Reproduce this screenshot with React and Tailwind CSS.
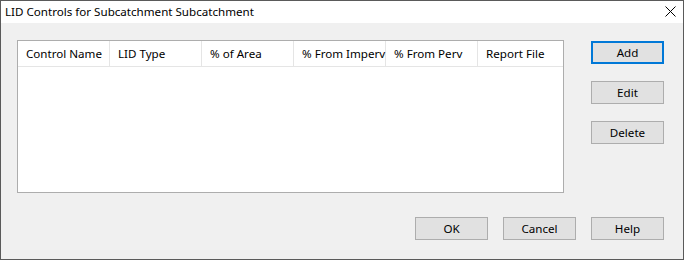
import React from 'react';

const columns = ['Control Name', 'LID Type', '% of Area', '% From Imperv', '% From Perv', 'Report File'];

const Button = ({ children, focused }) => (
  <button
    className={`w-[73px] h-[23px] bg-[#e1e1e1] text-[11.6px] text-black flex items-center justify-center ${
      focused ? 'border-2 border-[#0078d7]' : 'border border-[#adadad]'
    }`}
  >
    {children}
  </button>
);

export default function App() {
  return (
    <div
      className="w-[684px] h-[260px] border border-[#5a5a5a] bg-[#f0f0f0] flex flex-col text-black"
      style={{ fontFamily: '"Noto Sans", "Open Sans", sans-serif' }}
    >
      <div className="h-[22px] bg-white flex items-center justify-between pl-[4px] pr-[7px]">
        <span className="text-[11.6px] leading-none">LID Controls for Subcatchment Subcatchment</span>
        <svg width="11" height="11" viewBox="0 0 11 11" className="mt-[-1px]">
          <path d="M0.5 0.5 L10.5 10.5 M10.5 0.5 L0.5 10.5" stroke="#000" strokeWidth="1" />
        </svg>
      </div>

      <div className="flex pl-[16px] pt-[17px]">
        <div className="w-[547px] h-[153px] bg-white border border-[#adadad] overflow-hidden">
          <div className="flex h-[26px] border-b border-[#e5e5e5]">
            {columns.map((c, i) => (
              <div
                key={c}
                className={`w-[92px] shrink-0 flex items-center pl-[8px] text-[11.6px] whitespace-nowrap ${
                  i < columns.length - 1 ? 'border-r border-[#e5e5e5]' : ''
                }`}
              >
                {c}
              </div>
            ))}
          </div>
        </div>
        <div className="flex flex-col gap-[17px] ml-[27px] pt-[1px]">
          <Button focused>Add</Button>
          <Button>Edit</Button>
          <Button>Delete</Button>
        </div>
      </div>

      <div className="flex justify-end gap-[15px] pr-[19px] mt-[24px]">
        <Button>OK</Button>
        <Button>Cancel</Button>
        <Button>Help</Button>
      </div>
    </div>
  );
}
